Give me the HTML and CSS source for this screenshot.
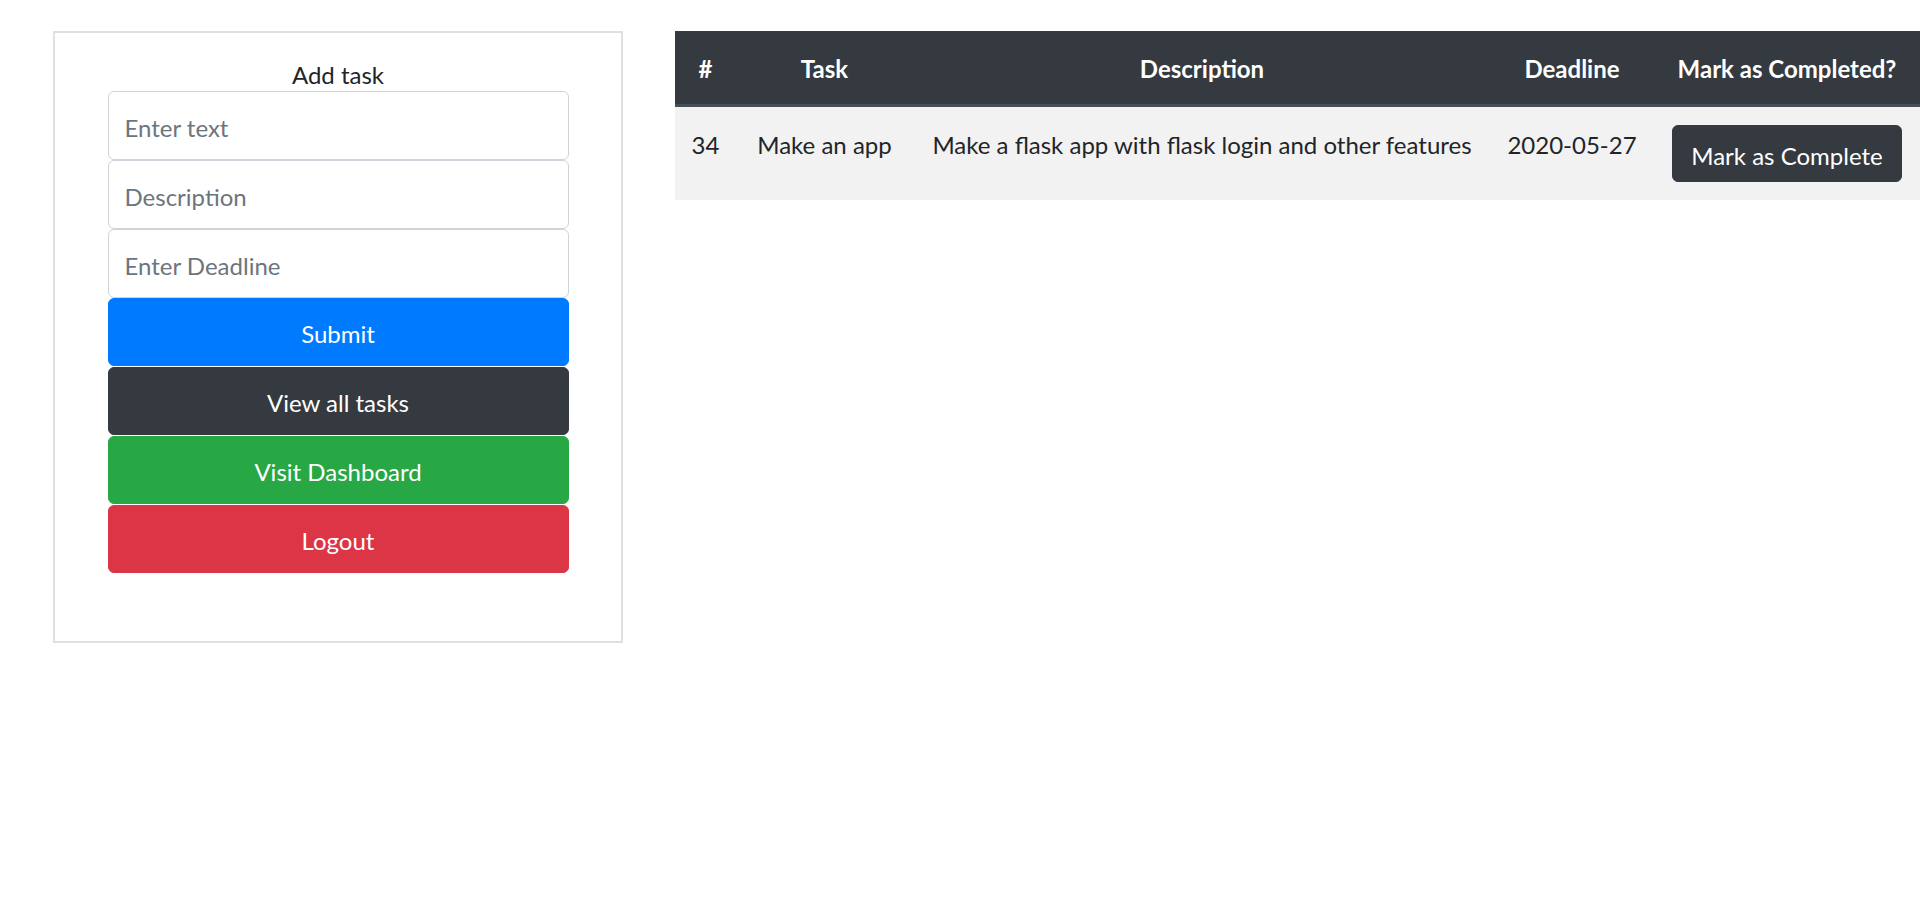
FILE: index.html
```html
<!DOCTYPE html>
<html lang="en">
<head>
<meta charset="utf-8">
<title>Tasks</title>
<link rel="stylesheet" href="styles.css">
</head>
<body>
<div class="page">
  <div class="card">
    <div class="card-title">Add task</div>
    <form class="task-form">
      <input class="field" type="text" placeholder="Enter text">
      <input class="field" type="text" placeholder="Description">
      <input class="field" type="text" placeholder="Enter Deadline">
      <button class="btn btn-primary" type="button">Submit</button>
      <button class="btn btn-dark" type="button">View all tasks</button>
      <button class="btn btn-success" type="button">Visit Dashboard</button>
      <button class="btn btn-danger" type="button">Logout</button>
    </form>
  </div>
  <table class="tasks">
    <colgroup>
      <col class="c-num"><col class="c-task"><col class="c-desc"><col class="c-dead"><col class="c-done">
    </colgroup>
    <thead>
      <tr>
        <th>#</th>
        <th>Task</th>
        <th>Description</th>
        <th>Deadline</th>
        <th>Mark as Completed?</th>
      </tr>
    </thead>
    <tbody>
      <tr>
        <td>34</td>
        <td>Make an app</td>
        <td>Make a flask app with flask login and other features</td>
        <td>2020-05-27</td>
        <td class="cell-action"><button class="btn-mark" type="button">Mark as Complete</button></td>
      </tr>
    </tbody>
  </table>
</div>
</body>
</html>
```
FILE: styles.css
```css
html, body {
  margin: 0;
  padding: 0;
  background: #fff;
  overflow: hidden;
}
body {
  font-family: Lato, "Noto Sans", "Liberation Sans", sans-serif;
  font-size: 24px;
  line-height: 1.5;
  color: #212529;
}
.page {
  display: flex;
  align-items: flex-start;
  gap: 52px;
  padding: 31px 0 0 53px;
}
.card {
  flex: 0 0 auto;
  box-sizing: border-box;
  width: 570px;
  border: 2px solid #e0e0e0;
  padding: 22px 0 67px;
  display: flex;
  flex-direction: column;
  align-items: center;
}
.card-title {
  font-size: 24px;
  padding-top: 3px;
  line-height: 33px;
  text-align: center;
  color: #212529;
}
.task-form {
  width: 461px;
  display: flex;
  flex-direction: column;
  margin: 0;
}
.field {
  box-sizing: border-box;
  height: 69px;
  width: 100%;
  margin: 0;
  padding: 3px 16px 0;
  border: 1.5px solid #ced4da;
  border-radius: 6px;
  font-family: inherit;
  font-size: 24px;
  color: #495057;
  background: #fff;
  outline: none;
}
.field::placeholder {
  color: #6c757d;
  opacity: 1;
}
.btn {
  box-sizing: border-box;
  height: 68px;
  width: 100%;
  margin: 0 0 1px;
  padding: 3px 0 0;
  border: 1.5px solid transparent;
  border-radius: 6px;
  font-family: inherit;
  font-size: 24px;
  line-height: 36px;
  color: #fff;
  text-align: center;
  cursor: pointer;
}
.btn-primary { background: #007bff; border-color: #007bff; }
.btn-dark { background: #343a40; border-color: #343a40; }
.btn-success { background: #28a745; border-color: #28a745; }
.btn-danger { background: #dc3545; border-color: #dc3545; }

.tasks {
  flex: 0 0 auto;
  width: 1246px;
  table-layout: fixed;
  border-collapse: collapse;
}
.c-num { width: 61px; }
.c-task { width: 177px; }
.c-desc { width: 578px; }
.c-dead { width: 162px; }
.c-done { width: 268px; }
.tasks th,
.tasks td {
  text-align: center;
  vertical-align: top;
  line-height: 36px;
  white-space: nowrap;
}
.tasks th {
  padding: 20px 0 17px;
  background: #343a40;
  color: #fff;
  font-weight: 700;
  border-bottom: 3px solid #454d55;
}
.tasks td {
  padding: 20px 0 16px;
  background: #f2f2f2;
  color: #212529;
}
.tasks td.cell-action {
  padding: 18px 0;
}
.btn-mark {
  box-sizing: border-box;
  height: 57px;
  padding: 11px 18px 7px;
  border: 1.5px solid #343a40;
  border-radius: 6px;
  background: #343a40;
  color: #fff;
  font-family: inherit;
  font-size: 24px;
  line-height: 36px;
  cursor: pointer;
}
```
